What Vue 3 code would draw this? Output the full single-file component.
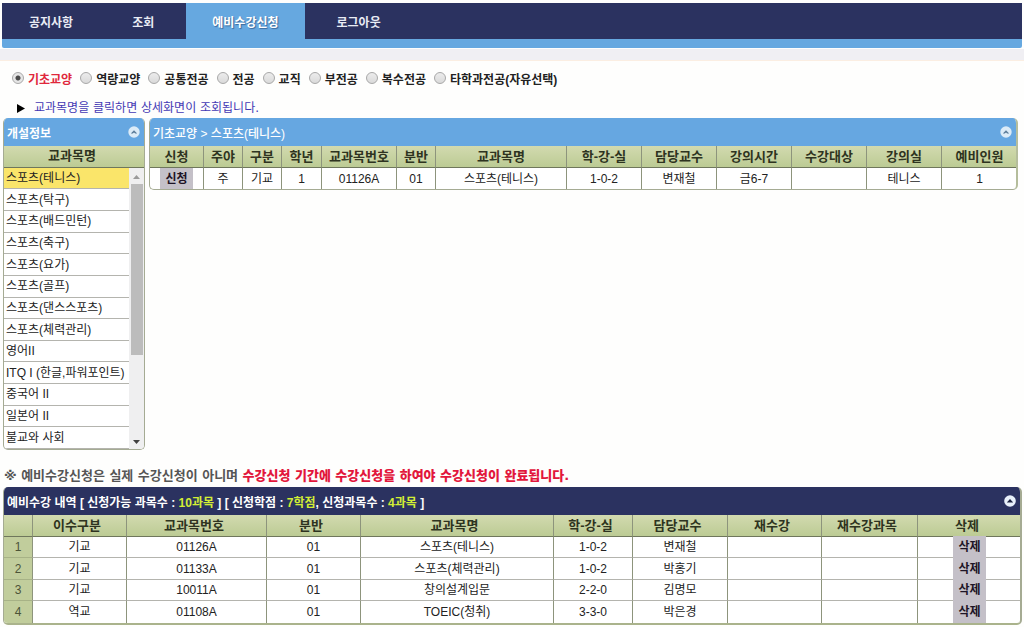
<script setup>
import { ref } from 'vue'

const menu = [
  { label: '공지사항', tight: true },
  { label: '조회' },
  { label: '예비수강신청', tight: true, active: true },
  { label: '로그아웃' },
]

const kinds = ['기초교양', '역량교양', '공통전공', '전공', '교직', '부전공', '복수전공', '타학과전공(자유선택)']
const kind = ref('기초교양')

const subjects = [
  '스포츠(테니스)', '스포츠(탁구)', '스포츠(배드민턴)', '스포츠(축구)', '스포츠(요가)',
  '스포츠(골프)', '스포츠(댄스스포츠)', '스포츠(체력관리)', '영어II', 'ITQ I (한글,파워포인트)',
  '중국어 II', '일본어 II', '불교와 사회',
]
const subject = ref(subjects[0])

const classCols = [
  { name: '신청', w: 53 }, { name: '주야', w: 39 }, { name: '구분', w: 39 }, { name: '학년', w: 40 },
  { name: '교과목번호', w: 75 }, { name: '분반', w: 39 }, { name: '교과목명', w: 131 },
  { name: '학-강-실', w: 75 }, { name: '담당교수', w: 75 }, { name: '강의시간', w: 75 },
  { name: '수강대상', w: 75 }, { name: '강의실', w: 75 }, { name: '예비인원', w: 76 },
]
const classRow = ['주', '기교', '1', '01126A', '01', '스포츠(테니스)', '1-0-2', '변재철', '금6-7', '', '테니스', '1']

const pickCols = [
  { name: '', w: 28 }, { name: '이수구분', w: 94 }, { name: '교과목번호', w: 140 }, { name: '분반', w: 94 },
  { name: '교과목명', w: 193 }, { name: '학-강-실', w: 79 }, { name: '담당교수', w: 95 },
  { name: '재수강', w: 94 }, { name: '재수강과목', w: 96 }, { name: '삭제', w: 104 },
]
const picks = [
  ['기교', '01126A', '01', '스포츠(테니스)', '1-0-2', '변재철', '', ''],
  ['기교', '01133A', '01', '스포츠(체력관리)', '1-0-2', '박홍기', '', ''],
  ['기교', '10011A', '01', '창의설계입문', '2-2-0', '김명모', '', ''],
  ['역교', '01108A', '01', 'TOEIC(청취)', '3-3-0', '박은경', '', ''],
]
</script>

<template>
  <div class="page">
    <nav class="menu">
      <a v-for="m in menu" :key="m.label" href="#" :class="{ tight: m.tight, active: m.active }">{{ m.label }}</a>
    </nav>
    <div class="strip"></div>

    <div class="kinds" role="radiogroup" aria-label="이수구분">
      <label v-for="k in kinds" :key="k" :class="{ on: k === kind }">
        <input v-model="kind" type="radio" name="kind" :value="k" />{{ k }}
      </label>
    </div>

    <p class="hint">
      <svg width="8" height="9" viewBox="0 0 8 9"><path d="M0 0L8 4.5L0 9Z" fill="#000" /></svg>
      교과목명을 클릭하면 상세화면이 조회됩니다.
    </p>

    <div class="columns">
      <section class="panel side">
        <header class="bar">
          <h2>개설정보</h2>
          <button class="fold" type="button" aria-label="접기">
            <svg width="12" height="12" viewBox="0 0 12 12"><circle cx="6" cy="6" r="5.7" fill="#dcebf7" /><path d="M2.8 7.4L6 4.2L9.2 7.4H7.2L6 6.6L4.8 7.4Z" fill="#5c7c99" /></svg>
          </button>
        </header>
        <div class="colhead">교과목명</div>
        <div class="scroller">
          <table class="subjects">
            <tbody>
              <tr v-for="s in subjects" :key="s" :class="{ picked: s === subject }">
                <td><button type="button" @click="subject = s">{{ s }}</button></td>
              </tr>
            </tbody>
          </table>
          <div class="track">
            <svg width="7" height="4" viewBox="0 0 7 4"><path d="M0 4L3.5 0L7 4Z" fill="#9a9a9a" /></svg>
            <div class="thumb"></div>
            <svg width="7" height="4" viewBox="0 0 7 4"><path d="M0 0L3.5 4L7 0Z" fill="#404040" /></svg>
          </div>
        </div>
      </section>

      <section class="panel main">
        <header class="bar">
          <h2>기초교양 &gt; 스포츠(테니스)</h2>
          <button class="fold" type="button" aria-label="접기">
            <svg width="12" height="12" viewBox="0 0 12 12"><circle cx="6" cy="6" r="5.7" fill="#dcebf7" /><path d="M2.8 7.4L6 4.2L9.2 7.4H7.2L6 6.6L4.8 7.4Z" fill="#5c7c99" /></svg>
          </button>
        </header>
        <table class="grid">
          <colgroup><col v-for="c in classCols" :key="c.name" :style="{ width: c.w + 'px' }" /></colgroup>
          <thead>
            <tr><th v-for="c in classCols" :key="c.name">{{ c.name }}</th></tr>
          </thead>
          <tbody>
            <tr>
              <td><button class="act" type="button">신청</button></td>
              <td v-for="(v, i) in classRow" :key="i">{{ v }}</td>
            </tr>
          </tbody>
        </table>
      </section>
    </div>

    <p class="notice">※ 예비수강신청은 실제 수강신청이 아니며 <strong>수강신청 기간에 수강신청을 하여야 수강신청이 완료됩니다.</strong></p>

    <section class="panel picks">
      <header class="bar dark">
        <h2>예비수강 내역 [ 신청가능 과목수 : <em>10과목</em> ] [ 신청학점 : <em>7학점</em>, 신청과목수 : <em>4과목</em> ]</h2>
        <button class="fold" type="button" aria-label="접기">
          <svg width="12" height="12" viewBox="0 0 12 12"><circle cx="6" cy="6" r="5.8" fill="#e8f0fa" /><path d="M2.8 7.4L6 4L9.2 7.4Z" fill="#1c2340" /></svg>
        </button>
      </header>
      <table class="grid">
        <colgroup><col v-for="c in pickCols" :key="c.name" :style="{ width: c.w + 'px' }" /></colgroup>
        <thead>
          <tr><th v-for="c in pickCols" :key="c.name">{{ c.name }}</th></tr>
        </thead>
        <tbody>
          <tr v-for="(p, n) in picks" :key="n">
            <td class="no">{{ n + 1 }}</td>
            <td v-for="(v, i) in p" :key="i">{{ v }}</td>
            <td><button class="act" type="button">삭제</button></td>
          </tr>
        </tbody>
      </table>
    </section>
  </div>
</template>

<style>
body {
  background: #fefefd;
}
</style>

<style scoped>
.page {
  box-sizing: border-box;
  padding: 3px 2px 2px;
  font: 12px/16px "Liberation Sans", "Noto Sans CJK KR", sans-serif;
  color: #222;
}
button {
  font: inherit;
  color: inherit;
  border: 0;
  padding: 0;
  background: none;
  cursor: pointer;
}
.menu {
  display: flex;
  height: 45px;
  background: linear-gradient(#2b3260 36px, #66a8e0 36px);
  border-radius: 0 0 2px 2px;
}
.menu a {
  height: 36px;
  padding: 0 32px;
  font-weight: 700;
  line-height: 41px;
  color: #e9ecf5;
  text-decoration: none;
}
.menu a.tight {
  padding: 0 27px;
}
.menu a.active {
  padding: 0 26px;
  background: #66a8e0;
  color: #fff;
  text-shadow: 1px 1px 1px #3c689a;
}
.strip {
  height: 11px;
  margin: 1px -2px 0;
  background: #f0eff3;
  border-bottom: 1px solid #fbeee2;
}
.kinds {
  display: flex;
  gap: 8px;
  padding: 11px 10px 0;
  font-weight: 700;
}
.kinds label {
  display: flex;
  align-items: center;
  gap: 4px;
  color: #222;
}
.kinds label.on {
  color: #e0283c;
}
.kinds input {
  appearance: none;
  box-sizing: border-box;
  width: 12px;
  height: 12px;
  margin: 0 0 4px;
  border: 1px solid #a8a8a8;
  border-radius: 50%;
  background: linear-gradient(#ececec, #dadada);
}
.kinds input:checked {
  background: radial-gradient(circle, #4a4a4a 2px, #e6e6e6 3px);
}
.hint {
  display: flex;
  align-items: center;
  gap: 9px;
  margin: 12px 0 2px;
  padding-left: 15px;
  font-family: "DejaVu Sans", "Noto Sans CJK KR", sans-serif;
  color: #4338b4;
}
.columns {
  display: flex;
  align-items: flex-start;
  gap: 4px;
  padding: 0 4px 0 1px;
}
.panel {
  box-sizing: border-box;
  border: 1px solid #a5ab93;
  border-top: 0;
  border-radius: 5px;
  overflow: hidden;
  background: #fff;
}
.side {
  flex: 0 0 142px;
}
.main {
  flex: 1;
  border-right: 2px solid #b5bd9c;
}
.bar {
  display: flex;
  align-items: center;
  justify-content: space-between;
  height: 28px;
  margin: 0 -1px;
  padding: 4px 5px 0 4px;
  box-sizing: border-box;
  background: #66a7e1;
  color: #fff;
}
.bar h2 {
  margin: 0;
  font: 700 12px/16px "Liberation Sans", "Noto Sans CJK KR", sans-serif;
}
.main .bar h2 {
  font-weight: 500;
}
.bar.dark {
  background: #2b3260;
}
.bar em {
  font-style: normal;
  color: #d3ee35;
}
.fold {
  display: flex;
  margin-bottom: 4px;
}
.colhead,
.grid th {
  box-sizing: border-box;
  height: 22px;
  padding: 0;
  font-size: 13px;
  font-weight: 700;
  line-height: 20px;
  text-align: center;
  color: #2e3320;
  background: linear-gradient(#d2daaf, #bccb94);
  border-bottom: 1px solid #6f775c;
}
.colhead {
  padding-right: 4px;
}
.scroller {
  display: flex;
  height: 281px;
}
.subjects {
  flex: 1;
  height: 281px;
  border-collapse: collapse;
}
.subjects td {
  padding: 0 0 0 2px;
  border-bottom: 1px solid #b4b4ae;
}
.subjects button {
  display: block;
  width: 100%;
  text-align: left;
  white-space: nowrap;
}
.picked {
  background: #fae56a;
}
.track {
  flex: 0 0 15px;
  display: flex;
  flex-direction: column;
  align-items: center;
  justify-content: space-between;
  box-sizing: border-box;
  padding: 7px 1px 5px;
  background: #efeff0;
}
.thumb {
  width: 12px;
  height: 171px;
  margin: 5px 0 auto;
  background: #bcbcbc;
}
.grid {
  width: 100%;
  table-layout: fixed;
  border-collapse: separate;
  border-spacing: 0;
}
.grid th + th,
.grid td + td {
  border-left: 1px solid #8d947c;
}
.grid td {
  box-sizing: border-box;
  height: 21px;
  padding: 0;
  text-align: center;
  border-bottom: 1px solid #b4b4ae;
}
.grid tr:nth-child(even) td {
  height: 22px;
}
.grid tr:last-child td {
  border-bottom: 0;
}
.act {
  width: 33px;
  height: 22px;
  font-size: 12px;
  font-weight: 700;
  color: #1d1426;
  background: #c4c0c8;
  display: block;
  margin: -1px auto;
}
.notice {
  margin: 18px 0 3px 2px;
  font: 700 13px/16px "DejaVu Sans", "Noto Sans CJK KR", sans-serif;
  color: #555;
}
.notice strong {
  color: #e2173c;
}
.picks {
  margin: 0 0 0 1px;
  border-right-width: 2px;
  border-bottom: 2px solid #aab38c;
}
.picks .grid th {
  padding-right: 5px;
}
.picks .grid td.no {
  background: #c1cd9c;
  border-bottom-color: #a7b286;
  color: #4c5438;
}
</style>
